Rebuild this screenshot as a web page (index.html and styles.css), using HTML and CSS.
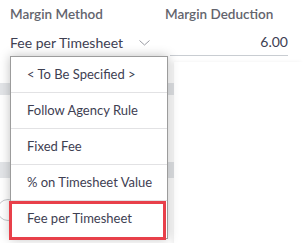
FILE: index.html
```html
<!DOCTYPE html>
<html>
<head>
<meta charset="utf-8">
<link rel="stylesheet" href="styles.css">
</head>
<body>
<div class="form">
  <div class="labels">
    <div class="label">Margin Method</div>
    <div class="label">Margin Deduction</div>
  </div>
  <div class="values">
    <div class="select">
      <span>Fee per Timesheet</span>
      <svg class="chev" width="11" height="6" viewBox="0 0 11 6"><path d="M0.5 0.5 L5.5 5 L10.5 0.5" fill="none" stroke="#9a9ca3" stroke-width="1"/></svg>
    </div>
    <div class="amount">6.00</div>
  </div>
  <div class="backdrop">
    <div class="gap g1"></div>
    <div class="band b1"></div>
    <div class="gap g2"></div>
    <div class="band b2"></div>
    <div class="gap g3"></div>
    <div class="panel"></div>
    <div class="edit-btn"></div>
  </div>
</div>
<ul class="menu">
  <li class="item">&lt; To Be Specified &gt;</li>
  <li class="item">Follow Agency Rule</li>
  <li class="item">Fixed Fee</li>
  <li class="item">% on Timesheet Value</li>
  <li class="item">Fee per Timesheet</li>
</ul>
<div class="highlight"></div>
</body>
</html>
```
FILE: styles.css
```css
* { box-sizing: border-box; }
html, body { margin: 0; padding: 0; background: #fff; }
body {
  width: 303px;
  height: 243px;
  overflow: hidden;
  position: relative;
  font-family: Lato, "Open Sans", sans-serif;
  color: #3c3d4a;
}
.form { padding: 0 15px 0 10px; }
.labels {
  display: grid;
  grid-template-columns: 155px 1fr;
  height: 28px;
  align-items: center;
}
.label {
  font-size: 13.5px;
  font-weight: 600;
  color: #63646d;
}
.values {
  display: grid;
  grid-template-columns: 155px 1fr;
  height: 28px;
  align-items: center;
}
.select {
  display: flex;
  align-items: center;
  justify-content: space-between;
  font-size: 14px;
  color: #3e4052;
  padding-right: 15px;
}
.chev { margin-top: 2px; }
.amount {
  margin-left: 5px;
  text-align: right;
  font-size: 14px;
  color: #3e4052;
  height: 28px;
  line-height: 28px;
  border-bottom: 1px solid #c9cdd2;
}
.backdrop {
  position: relative;
  margin: 0 -15px 0 -10px;
  height: 190px;
}
.gap.g1 { height: 27px; }
.band { background: #e3e5e8; }
.band.b1 { height: 12px; }
.gap.g2 { height: 67px; }
.band.b2 { height: 16px; }
.panel {
  position: absolute;
  left: 174px;
  top: 6px;
  right: 0;
  bottom: 0;
  background: #fff;
  box-shadow: -2px 0 4px rgba(0,0,0,0.06);
}
.edit-btn {
  position: absolute;
  left: -3px;
  top: 143px;
  width: 22px;
  height: 22px;
  border: 1px solid #c4c6ca;
  border-radius: 50%;
}
.menu {
  position: absolute;
  left: 10px;
  top: 56px;
  width: 158px;
  height: 183px;
  margin: 0;
  padding: 0;
  list-style: none;
  background: #fff;
  border: 1px solid #9c9c9c;
  box-shadow: 0 0 10px rgba(0,0,0,0.25);
}
.item {
  height: 36px;
  line-height: 35px;
  padding-left: 16px;
  font-size: 13px;
  color: #3e4052;
  border-bottom: 1px solid #e2e2e4;
}
.item:last-child { border-bottom: none; }
.highlight {
  position: absolute;
  left: 9px;
  top: 201px;
  width: 157px;
  height: 39px;
  border: 3px solid #e8404a;
}
```
